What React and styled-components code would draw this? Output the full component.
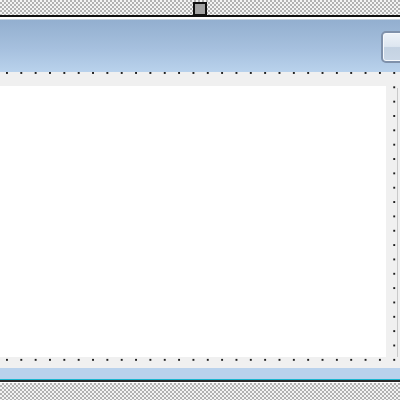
import React from "react";
import styled, { createGlobalStyle } from "styled-components";

const Global = createGlobalStyle`
  html, body { margin: 0; padding: 0; background: #ffffff; overflow: hidden; }
  body { font-family: "Liberation Sans", Arial, sans-serif; }
`;

const Frame = styled.div`
  width: 400px;
  height: 400px;
  display: flex;
  flex-direction: column;
  overflow: hidden;
`;

const Hatch = styled.div`
  position: relative;
  flex: 0 0 ${(p) => p.$h}px;
  background-color: #ffffff;
  background-image: conic-gradient(#b2b2b2 25%, #f4f4f4 0 50%, #b2b2b2 0 75%, #f4f4f4 0);
  background-size: 4px 4px;
`;

const Handle = styled.div`
  position: absolute;
  left: 193px;
  top: 2px;
  width: 14px;
  height: 14px;
  box-sizing: border-box;
  border: 2px solid #111111;
  background-color: #a2a2a2;
  z-index: 2;
`;

const Rule = styled.div`
  flex: 0 0 ${(p) => p.$h}px;
  background: ${(p) => p.$c};
`;

const Header = styled.div`
  flex: 0 0 52px;
  display: flex;
  align-items: center;
  justify-content: flex-end;
  background: linear-gradient(to bottom, #93afcf 0%, #a6c0de 55%, #b9d2ec 100%);
  overflow: hidden;
`;

const HeaderButton = styled.div`
  flex: 0 0 auto;
  width: 40px;
  height: 28px;
  margin-right: -25px;
  margin-top: 2px;
  border: 2px solid #7f91ab;
  border-radius: 5px;
  background: linear-gradient(to bottom, #eef3f9 0%, #dde6f0 48%, #c4d2e2 52%, #cbd8e7 100%);
  box-shadow: inset 0 0 0 1px #f6f9fc;
`;

const Surface = styled.div`
  flex: 0 0 296px;
  display: flex;
  padding: 14px 14px 11px 0;
  box-sizing: border-box;
  background-color: #f0f0f0;
  background-image: linear-gradient(to right, #1e1e1e 2px, transparent 2px);
  background-size: 14.35px 14.35px;
  background-position: 6px 0;
  position: relative;
  &::before {
    content: "";
    position: absolute;
    inset: 0;
    background-image: linear-gradient(to bottom, transparent 2px, #f0f0f0 2px);
    background-size: 14.35px 14.35px;
    background-position: 0 0;
    pointer-events: none;
  }
  &::after {
    content: "";
    position: absolute;
    right: 2px;
    top: 16px;
    bottom: 11px;
    width: 1px;
    background: #c9c9c9;
  }
`;

const Canvas = styled.div`
  position: relative;
  z-index: 1;
  flex: 1;
  background: #ffffff;
`;

export default function App() {
  return (
    <Frame>
      <Global />
      <Hatch $h={15}>
        <Handle />
      </Hatch>
      <Rule $h={2} $c="#111111" />
      <Rule $h={2} $c="#ffffff" />
      <Rule $h={1} $c="#c6d2df" />
      <Header>
        <HeaderButton />
      </Header>
      <Surface>
        <Canvas />
      </Surface>
      <Rule $h={11} $c="#bad2ec" />
      <Rule $h={1} $c="#1cb6cf" />
      <Rule $h={2} $c="#2a2a2a" />
      <Rule $h={1} $c="#ffffff" />
      <Hatch $h={17} />
    </Frame>
  );
}
